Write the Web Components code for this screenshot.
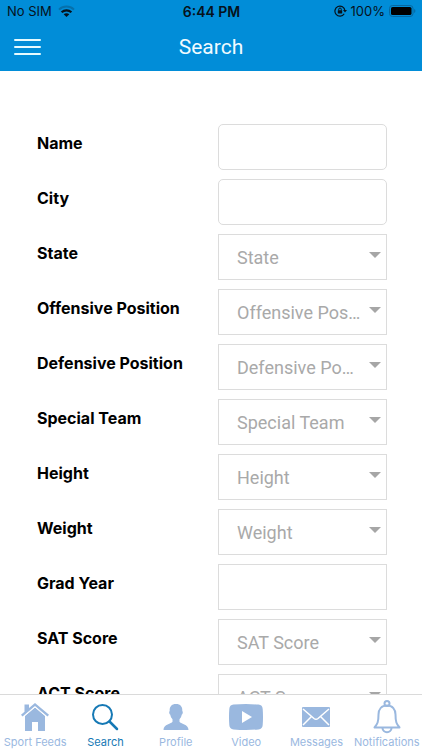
<!DOCTYPE html>
<html lang="en">
<head>
<meta charset="utf-8">
<meta name="viewport" content="width=device-width, initial-scale=1">
<title>Search</title>
<style>
  html, body {
    height: 100%;
    margin: 0;
  }
  body {
    background: #fff;
    font-family: Roboto, "Liberation Sans", sans-serif;
  }
</style>
</head>
<body>
<search-page></search-page>

<script>
const define = (name, html, setup) => {
  const tmpl = document.createElement('template');
  tmpl.innerHTML = html;

  customElements.define(name, class extends HTMLElement {
    constructor() {
      super();
      this.attachShadow({mode: 'open'}).appendChild(tmpl.content.cloneNode(true));
    }

    connectedCallback() {
      if (setup) setup(this, this.shadowRoot);
    }
  });
};

define('status-bar', `
  <style>
    :host {
      display: grid;
      grid-template-columns: 1fr auto 1fr;
      align-items: center;
      height: 22px;
      padding: 0 6px 0 7px;
      font: 14px Inter, "Liberation Sans", sans-serif;
      color: #06121c;
    }
    .side { display: flex; align-items: center; gap: 6px; font-size: 13px; }
    .right { justify-content: flex-end; gap: 4px; }
    .time { font-weight: 600; }
    svg { display: block; }
  </style>
  <div class="side">
    <span>No SIM</span>
    <svg width="17" height="12" viewBox="0 0 17 12" fill="none" stroke-width="2">
      <path d="M1 4.6C5.2.6 11.800.6 16 4.600" stroke="#0670ab"/>
      <path d="M3.600 7.300C6.400 4.700 10.600 4.700 13.400 7.300" stroke="#06121c" stroke-width="2.200"/>
      <path d="M8.500 12 5.700 9.300C7.300 7.900 9.700 7.900 11.300 9.300Z" fill="#06121c"/>
    </svg>
  </div>
  <div class="time">6:44 PM</div>
  <div class="side right">
    <svg width="13" height="12" viewBox="0 0 13 12" fill="none" stroke="#06121c">
      <path d="M10.200 8.700A5 5 0 1 1 10.900 5.600" stroke-width="1.200"/>
      <path d="M9 5h4l-2 2.600z" fill="#06121c" stroke="none"/>
      <path d="M4.700 5.500V4.300a1.300 1.300 0 0 1 2.600 0v1.200"/>
      <rect x="3.800" y="5.200" width="4.400" height="3.300" rx=".5" fill="#06121c" stroke="none"/>
    </svg>
    <span>100%</span>
    <svg width="27" height="12" viewBox="0 0 27 12">
      <rect x=".5" y=".5" width="23.500" height="11" rx="3" fill="none" stroke="#0768a0"/>
      <rect x="2" y="2" width="20.500" height="8" rx="1.600" fill="#000"/>
      <path d="M25.200 4v4c1.600-.6 1.600-3.400 0-4z" fill="#0768a0"/>
    </svg>
  </div>
`);

define('nav-bar', `
  <style>
    :host {
      display: grid;
      grid-template-columns: 1fr auto 1fr;
      align-items: center;
      height: 49px;
      padding: 0 14px;
      color: #f0fbff;
    }
    button {
      display: grid;
      gap: 4px;
      width: 27px;
      padding: 0;
      border: 0;
      background: none;
      cursor: pointer;
    }
    i { height: 2px; border-radius: 1px; background: #e6fbff; }
    button i + i { margin-top: 1px; }
    h1 { margin: 0; font-size: 21px; font-weight: 400; line-height: 26px; }
  </style>
  <button type="button" aria-label="Menu"><i></i><i></i><i></i></button>
  <h1><slot></slot></h1>
`);

define('form-row', `
  <style>
    :host {
      display: grid;
      grid-template-columns: minmax(0, 1fr) minmax(0, 1fr);
      gap: 12px;
    }
    label {
      padding-top: 9px;
      font-family: Inter, Roboto, sans-serif;
      font-size: 16px;
      font-weight: 700;
      line-height: 20px;
      color: #000;
    }
    .field { display: grid; align-items: center; }
    input, select {
      grid-area: 1 / 1;
      box-sizing: border-box;
      width: 100%;
      height: 46px;
      margin: 0;
      padding: 0 24px 0 18px;
      border: 1px solid #dcdcdc;
      border-radius: 0;
      outline: 0;
      background: #fff;
      font: inherit;
      font-size: 18px;
      color: #a9a9a9;
    }
    select { appearance: none; text-overflow: ellipsis; }
    :host([rounded]) input { border-radius: 5px; }
    .arrow {
      grid-area: 1 / 1;
      justify-self: end;
      margin: 0 6px 4px 0;
      border: 6px solid transparent;
      border-top-color: #a6a6a6;
      border-bottom: 0;
      pointer-events: none;
    }
  </style>
  <label for="control"></label>
  <div class="field"></div>
`, (host, root) => {
  const name = host.getAttribute('label');
  root.querySelector('label').textContent = name;
  root.querySelector('.field').innerHTML = host.hasAttribute('select')
    ? `<select id="control"><option>${name}</option></select><span class="arrow"></span>`
    : '<input id="control" type="text">';
});

define('tab-item', `
  <style>
    :host { display: block; flex: 1 1 0; min-width: 0; color: #9ab8df; }
    :host([active]) { color: #1679b5; }
    a {
      display: flex;
      flex-direction: column;
      align-items: center;
      color: inherit;
      font-family: Inter, Roboto, sans-serif;
      font-size: 11px;
      line-height: 14px;
      text-decoration: none;
      white-space: nowrap;
    }
    .icon { display: grid; place-items: center; height: 40px; padding-top: 4px; box-sizing: border-box; }
    ::slotted(svg) { display: block; }
  </style>
  <a href="#"><span class="icon"><slot name="icon"></slot></span><span><slot></slot></span></a>
`);

define('tab-bar', `
  <style>
    :host {
      display: flex;
      height: 55px;
      border-top: 1px solid #dadada;
      background: #fff;
    }
  </style>
  <slot></slot>
`);

define('search-page', `
  <style>
    :host { display: flex; flex-direction: column; height: 100%; }
    header { background: #018dd8; }
    main { flex: 1; min-height: 0; overflow-y: auto; scrollbar-width: none; }
    form { display: grid; gap: 9px; padding: 53px 35px 30px 37px; }
  </style>
  <header>
    <status-bar></status-bar>
    <nav-bar>Search</nav-bar>
  </header>
  <main>
    <form>
      <form-row label="Name" rounded></form-row>
      <form-row label="City" rounded></form-row>
      <form-row label="State" select></form-row>
      <form-row label="Offensive Position" select></form-row>
      <form-row label="Defensive Position" select></form-row>
      <form-row label="Special Team" select></form-row>
      <form-row label="Height" select></form-row>
      <form-row label="Weight" select></form-row>
      <form-row label="Grad Year"></form-row>
      <form-row label="SAT Score" select></form-row>
      <form-row label="ACT Score" select></form-row>
    </form>
  </main>
  <tab-bar>
    <tab-item>
      <svg slot="icon" width="28" height="28" viewBox="0 0 28 28" fill="currentColor">
        <path d="M4 12.500 14 4l10 8.500V28h-7v-9h-6v9H4z"/>
        <path d="M14 0 28 11.700l-1.500 1.800L14 3 1.500 13.500 0 11.700 3.500 8.800V1.500H8V5z" />
        <path d="M2.300 14 14 4.100 25.700 14" fill="none" stroke="#fff" stroke-width="1"/>
      </svg>
      Sport Feeds
    </tab-item>
    <tab-item active>
      <svg slot="icon" width="28" height="28" viewBox="0 0 28 28" fill="none" stroke="currentColor">
        <circle cx="11.500" cy="11.500" r="9.500" stroke-width="2"/>
        <path d="m18.500 18.500 7.500 7.500" stroke-width="2.500" stroke-linecap="round"/>
      </svg>
      Search
    </tab-item>
    <tab-item>
      <svg slot="icon" width="28" height="28" viewBox="0 0 28 28" fill="currentColor">
        <path d="M14 1c4.500 0 6.600 2.700 6.300 7 .9.500.6 3-.6 3.800-.4 2.200-1.200 3.400-2.200 4.400v2.600c.8 2.200 9 2.100 9 8.200h-25c0-6.100 8.200-6 9-8.200v-2.600c-1-1-1.800-2.200-2.200-4.400C7.100 11 6.800 8.500 7.700 8 7.400 3.700 9.500 1 14 1z"/>
      </svg>
      Profile
    </tab-item>
    <tab-item>
      <svg slot="icon" width="34" height="26" viewBox="0 0 34 26" fill="currentColor">
        <path d="M4.500.6q12.500-1 25 0Q33.500 1 33.700 5q.6 8 0 16-.2 4-4.200 4.400-12.500 1-25 0Q.5 25 .3 21q-.6-8 0-16Q.5 1 4.500.6z"/>
        <path d="M13 7v12l10-6z" fill="#fff"/>
      </svg>
      Video
    </tab-item>
    <tab-item>
      <svg slot="icon" width="28" height="20" viewBox="0 0 28 20">
        <rect width="28" height="20" rx="1" fill="currentColor"/>
        <path d="m1 2 11 9.500q2 1.600 4 0L27 2M1 18l8.500-8.500M27 18l-8.500-8.500" fill="none" stroke="#fff" stroke-width="1.500"/>
      </svg>
      Messages
    </tab-item>
    <tab-item>
      <svg slot="icon" width="28" height="34" viewBox="0 0 28 34" fill="none" stroke="currentColor" stroke-width="2">
        <circle cx="14" cy="3.500" r="2.500"/>
        <path d="M14 5.500c-5.500 0-8.500 3.800-8.500 9C5.500 22 4.500 24 1.500 27.500h25C23.500 24 22.500 22 22.500 14.500c0-5.200-3-9-8.500-9z" stroke-linejoin="round"/>
        <path d="M9.500 28c0 5.500 9 5.500 9 0"/>
      </svg>
      Notifications
    </tab-item>
  </tab-bar>
`);
</script>
</body>
</html>
